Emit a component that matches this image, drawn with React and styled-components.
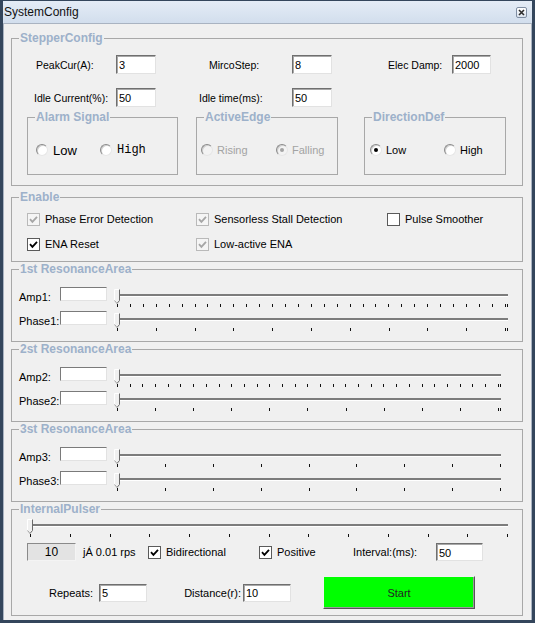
import styled, { createGlobalStyle } from "styled-components"

const GlobalStyle = createGlobalStyle`
  html, body {
    margin: 0;
    padding: 0;
    background: #f0f0f0;
  }
  body {
    font-family: "Liberation Sans", Arial, sans-serif;
    font-size: 11px;
    color: #000;
  }
  * { box-sizing: border-box; }
`

const Check = ({ on, disabled }) => (
  <CheckBox $disabled={disabled}>
    {on && (
      <svg width="9" height="9" viewBox="0 0 9 9">
        <path d="M1 4.2 L3.4 6.8 L8 1.8" fill="none" stroke={disabled ? "#a6a6a6" : "#000"} strokeWidth="1.8" />
      </svg>
    )}
  </CheckBox>
)

const CheckItem = ({ label, on, disabled }) => (
  <CheckLine>
    <Check on={on} disabled={disabled} />
    <span>{label}</span>
  </CheckLine>
)

const Radio = ({ label, on, disabled, width, font }) => (
  <RadioOpt $w={width} $disabled={disabled} $font={font}>
    <RadioDot $on={on} $disabled={disabled} />
    <span>{label}</span>
  </RadioOpt>
)

const SliderBar = ({ width, ticks, double, ml }) => (
  <Slider $w={width} $ml={ml}>
    <Track />
    <Ticks>
      {Array.from({ length: ticks }).map((_, i) =>
        double && i === ticks - 1 ? <DoubleTick key={i} /> : <Tick key={i} />
      )}
    </Ticks>
    <Thumb width="6" height="15" viewBox="0 0 6 15">
      <path d="M0.5 0.5 H5.5 V11.5 L3 14.5 L0.5 11.5 Z" fill="#f0f0f0" />
      <path d="M0.5 11.5 V0.5 H5.5" fill="none" stroke="#fff" />
      <path d="M5.5 0.5 V11.5 L3 14.5" fill="none" stroke="#6a6a6a" />
      <path d="M0.5 11.5 L3 14.5" fill="none" stroke="#a0a0a0" />
    </Thumb>
  </Slider>
)

const areas = [
  { title: "1st ResonanceArea", n: 1, width: 397, amp: 31, phase: 11, double: true },
  { title: "2st ResonanceArea", n: 2, width: 390, amp: 31, phase: 11, double: true },
  { title: "3st ResonanceArea", n: 3, width: 390, amp: 9, phase: 9, double: false },
]

export default function App() {
  return (
    <>
      <GlobalStyle />
      <Window>
        <TitleBar>
          <span>SystemConfig</span>
          <CloseBtn>
            <svg width="7" height="7" viewBox="0 0 7 7">
              <path d="M1 1 L6 6 M6 1 L1 6" stroke="#2d2d2d" strokeWidth="1.6" />
            </svg>
          </CloseBtn>
        </TitleBar>
        <Body>
          <Group>
            <Legend>StepperConfig</Legend>
            <Inner $pad="10px 15px 10px 15px">
              <FieldGrid>
                <FieldLabel $ml={9} $size={10.5}>PeakCur(A):</FieldLabel>
                <TextBox defaultValue="3" />
                <FieldLabel $ml={53} $size={10.5}>MircoStep:</FieldLabel>
                <TextBox defaultValue="8" />
                <FieldLabel $ml={56} $size={10.5}>Elec Damp:</FieldLabel>
                <TextBox defaultValue="2000" />
                <FieldLabel $ml={7} $size={10.5}>Idle Current(%):</FieldLabel>
                <TextBox defaultValue="50" />
                <FieldLabel $ml={43} $size={10.5}>Idle time(ms):</FieldLabel>
                <TextBox defaultValue="50" />
              </FieldGrid>
              <SubRow>
                <SubGroup $w={151}>
                  <Legend>Alarm Signal</Legend>
                  <RadioRow $pl={8}>
                    <Radio label="Low" width={64} font="big" />
                    <Radio label="High" font="mono" />
                  </RadioRow>
                </SubGroup>
                <SubGroup $w={142} $ml={18}>
                  <Legend>ActiveEdge</Legend>
                  <RadioRow $pl={4}>
                    <Radio label="Rising" width={75} disabled />
                    <Radio label="Falling" on disabled />
                  </RadioRow>
                </SubGroup>
                <SubGroup $w={142} $ml={26}>
                  <Legend>DirectionDef</Legend>
                  <RadioRow $pl={5}>
                    <Radio label="Low" width={74} on />
                    <Radio label="High" />
                  </RadioRow>
                </SubGroup>
              </SubRow>
            </Inner>
          </Group>

          <Group $mt={4}>
            <Legend>Enable</Legend>
            <Inner $pad="7px 0 9px 15px">
              <CheckGrid>
                <CheckItem label="Phase Error Detection" on disabled />
                <CheckItem label="Sensorless Stall Detection" on disabled />
                <CheckItem label="Pulse Smoother" />
                <CheckItem label="ENA Reset" on />
                <CheckItem label="Low-active ENA" on disabled />
              </CheckGrid>
            </Inner>
          </Group>

          {areas.map((a) => (
            <Group key={a.n}>
              <Legend>{a.title}</Legend>
              <Inner $pad="11px 0 6px 7px">
                <SliderRow>
                  <RowLabel>Amp{a.n}:</RowLabel>
                  <SmallBox />
                  <SliderBar width={a.width} ticks={a.amp} double={a.double} ml={7} />
                </SliderRow>
                <SliderRow>
                  <RowLabel>Phase{a.n}:</RowLabel>
                  <SmallBox />
                  <SliderBar width={a.width} ticks={a.phase} double={a.double} ml={7} />
                </SliderRow>
              </Inner>
            </Group>
          ))}

          <Group>
            <Legend>InternalPulser</Legend>
            <Inner $pad="1px 0 6px 15px">
              <SliderBar width={484} ticks={13} ml={0} />
              <SpeedRow>
                <SpeedBox>10</SpeedBox>
                <Unit>jÁ 0.01 rps</Unit>
                <CheckItem label="Bidirectional" on />
                <CheckItem label="Positive" on />
                <span>Interval:(ms):</span>
                <TextBox defaultValue="50" $h={18} />
              </SpeedRow>
              <RunRow>
                <RunLabel $pr={6}>Repeats:</RunLabel>
                <TextBox defaultValue="5" $h={18} />
                <RunLabel $pr={2}>Distance(r):</RunLabel>
                <TextBox defaultValue="10" $h={18} />
                <StartButton>Start</StartButton>
              </RunRow>
            </Inner>
          </Group>
        </Body>
      </Window>
    </>
  )
}

const Window = styled.div`
  width: 535px;
  height: 623px;
  display: flex;
  flex-direction: column;
  border: 3px solid #34465c;
  border-top-width: 1px;
  background: #f0f0f0;
  overflow: hidden;
`

const TitleBar = styled.div`
  height: 22px;
  flex-shrink: 0;
  display: flex;
  align-items: center;
  justify-content: space-between;
  padding: 0 5px 0 1px;
  background: linear-gradient(#e4ecf6, #d2deed);
  font-size: 12px;
  color: #111;
`

const CloseBtn = styled.div`
  width: 11px;
  height: 11px;
  display: flex;
  align-items: center;
  justify-content: center;
  border: 1px solid #7f8ea3;
  border-radius: 2px;
  background: linear-gradient(#ffffff, #dbe3ee);
`

const Body = styled.div`
  flex: 1;
  display: flex;
  flex-direction: column;
  padding: 7px 8px 0 7px;
  border: 1px solid #a9b3c1;
  border-bottom: none;
`

const Group = styled.fieldset`
  margin: ${({ $mt }) => $mt || 0}px 0 0;
  padding: 0;
  border: 1px solid #a8a8a8;
  min-width: 0;
`

const SubGroup = styled(Group)`
  width: ${({ $w }) => $w}px;
  margin: 0 0 0 ${({ $ml }) => $ml || 0}px;
`

const Legend = styled.legend`
  margin-left: 7px;
  padding: 0 1px;
  font-size: 12px;
  line-height: 14px;
  font-weight: bold;
  color: #9db1ca;
`

const Inner = styled.div`
  padding: ${({ $pad }) => $pad};
`

const FieldGrid = styled.div`
  display: grid;
  grid-template-columns: 89px 40px 136px 40px 120px 39px;
  grid-auto-rows: 19px;
  row-gap: 14px;
  align-items: center;
`

const FieldLabel = styled.span`
  margin-left: ${({ $ml }) => $ml}px;
  font-size: ${({ $size }) => $size || 11}px;
  white-space: nowrap;
`

const TextBox = styled.input`
  width: 100%;
  height: ${({ $h }) => $h || 19}px;
  margin: 0;
  padding: 1px 2px 0;
  font-family: "Liberation Sans", Arial, sans-serif;
  font-size: 11px;
  color: #000;
  background: #fff;
  border: 1px solid;
  border-color: #6f6f6f #e2e2e2 #e2e2e2 #6f6f6f;
  box-shadow: inset 1px 1px 0 #a8a8a8;
  outline: none;
`

const SubRow = styled.div`
  display: flex;
  margin-top: 3px;
`

const RadioRow = styled.div`
  display: flex;
  align-items: center;
  height: 16px;
  margin: 18px 0 16px;
  padding-left: ${({ $pl }) => $pl}px;
`

const RadioOpt = styled.label`
  display: flex;
  align-items: center;
  gap: ${({ $font }) => ($font ? 5 : 4)}px;
  width: ${({ $w }) => ($w ? `${$w}px` : "auto")};
  color: ${({ $disabled }) => ($disabled ? "#a3a3a3" : "#000")};
  font-size: ${({ $font }) => ($font === "big" ? 13 : $font === "mono" ? 12 : 11)}px;
  font-family: ${({ $font }) =>
    $font === "mono" ? `"Liberation Mono", "Courier New", monospace` : `"Liberation Sans", Arial, sans-serif`};
`

const RadioDot = styled.span`
  width: 12px;
  height: 12px;
  flex-shrink: 0;
  display: flex;
  align-items: center;
  justify-content: center;
  border-radius: 50%;
  border: 1px solid;
  border-color: #8a8a8a #e6e6e6 #e6e6e6 #8a8a8a;
  box-shadow: inset 1px 1px 0 #cfcfcf;
  background: ${({ $disabled }) => ($disabled ? "#f3f3f3" : "#fff")};

  &::after {
    content: "";
    width: 4px;
    height: 4px;
    border-radius: 50%;
    background: ${({ $disabled }) => ($disabled ? "#a3a3a3" : "#000")};
    display: ${({ $on }) => ($on ? "block" : "none")};
  }
`

const CheckGrid = styled.div`
  display: grid;
  grid-template-columns: 169px 191px 1fr;
  grid-auto-rows: 16px;
  row-gap: 9px;
  align-items: center;
`

const CheckLine = styled.label`
  display: flex;
  align-items: center;
  gap: 5px;
  white-space: nowrap;
`

const CheckBox = styled.span`
  width: 13px;
  height: 13px;
  flex-shrink: 0;
  display: flex;
  align-items: center;
  justify-content: center;
  border: 1px solid ${({ $disabled }) => ($disabled ? "#b9b9b9" : "#5a5a5a")};
  background: ${({ $disabled }) => ($disabled ? "#f5f5f5" : "#fff")};
`

const SliderRow = styled.div`
  display: flex;
  align-items: flex-start;
  height: 24px;
`

const RowLabel = styled.span`
  width: 41px;
  margin-top: 3px;
  line-height: 14px;
  white-space: nowrap;
`

const SmallBox = styled.input`
  width: 47px;
  height: 14px;
  margin: 0;
  padding: 0 2px;
  background: #fff;
  border: 1px solid;
  border-color: #7a7a7a #e2e2e2 #e2e2e2 #7a7a7a;
  outline: none;
`

const Slider = styled.div`
  position: relative;
  display: flow-root;
  width: ${({ $w }) => $w}px;
  height: 24px;
  margin-left: ${({ $ml }) => $ml}px;
  padding: 0 3px;
`

const Track = styled.div`
  margin-top: 7px;
  height: 2px;
  background: #7c7c7c;
  box-shadow: 0 1px 0 #fff;
`

const Ticks = styled.div`
  display: flex;
  justify-content: space-between;
  height: 3px;
  margin-top: 8px;
`

const Tick = styled.span`
  width: 1px;
  height: 3px;
  background: #111;
`

const DoubleTick = styled.span`
  width: 3px;
  height: 3px;
  border-left: 1px solid #111;
  border-right: 1px solid #111;
`

const Thumb = styled.svg`
  position: absolute;
  left: 0;
  top: 2px;
`

const SpeedRow = styled.div`
  display: grid;
  grid-template-columns: 49px 72px 111px 94px 83px 47px;
  align-items: center;
  height: 18px;
  margin-top: 2px;
  white-space: nowrap;
`

const SpeedBox = styled.div`
  height: 18px;
  display: flex;
  align-items: center;
  justify-content: center;
  font-size: 12px;
  background: #e3e3e3;
  border: 1px solid;
  border-color: #8a8a8a #f4f4f4 #f4f4f4 #8a8a8a;
`

const Unit = styled.span`
  margin-left: 7px;
`

const RunRow = styled.div`
  display: grid;
  grid-template-columns: 72px 48px 96px 48px 152px;
  align-items: center;
  margin-top: 15px;
  height: 33px;
`

const RunLabel = styled.span`
  text-align: right;
  padding-right: ${({ $pr }) => $pr}px;
  white-space: nowrap;
`

const StartButton = styled.button`
  margin-left: 32px;
  width: 152px;
  height: 33px;
  padding: 0;
  font-family: "Liberation Sans", Arial, sans-serif;
  font-size: 11px;
  color: #222;
  background: #00ff00;
  border: 1px solid;
  border-color: #f2f2f2 #555 #555 #f2f2f2;
  box-shadow: inset -1px -1px 0 #9a9a9a;
`
